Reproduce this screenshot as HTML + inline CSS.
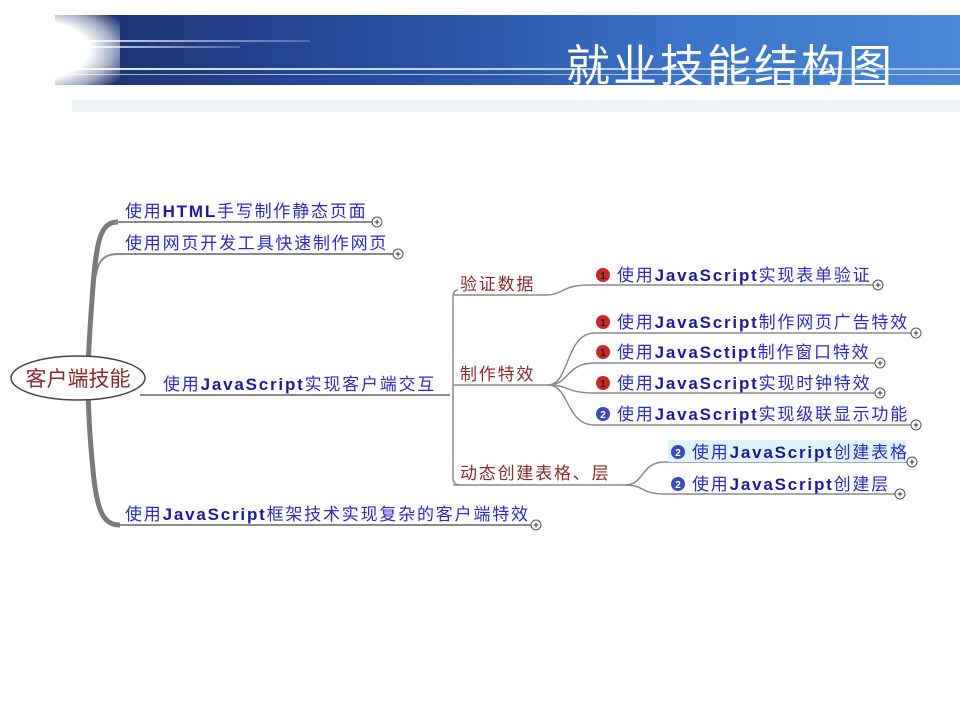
<!DOCTYPE html>
<html><head><meta charset="utf-8"><style>
html,body{margin:0;padding:0;background:#fff;}
body{width:960px;height:720px;position:relative;overflow:hidden;font-family:"Liberation Sans","Noto Sans CJK SC",sans-serif;}
.band{position:absolute;left:55px;top:15px;width:905px;height:70px;background:linear-gradient(90deg,#1c2f6a 0%,#243f8c 20%,#2a56a8 45%,#3a74c8 70%,#4a88d8 100%);}
.glow{position:absolute;left:0;top:5px;width:120px;height:90px;background:radial-gradient(ellipse at 30% 50%,#fff 45%,rgba(255,255,255,0.6) 65%,rgba(255,255,255,0) 85%);}
.streak{position:absolute;left:60px;height:2px;background:linear-gradient(90deg,rgba(255,255,255,.9),rgba(255,255,255,.2));}
.gray{position:absolute;left:72px;top:100px;width:888px;height:12px;background:#eef1f6;}
.title{position:absolute;left:566px;top:36px;color:#fff;font-size:44px;font-family:"Noto Sans CJK SC",sans-serif;letter-spacing:3px;line-height:52px;}
</style></head><body>
<div class="band"></div>
<div class="streak" style="top:40px;width:250px"></div>
<div class="streak" style="top:46px;width:180px"></div>
<div class="streak" style="top:68px;width:900px;height:2px;background:linear-gradient(90deg,rgba(255,255,255,.9),rgba(255,255,255,.5))"></div>
<div class="streak" style="top:74px;width:900px;height:1px;background:rgba(255,255,255,.6)"></div>
<div class="glow"></div>
<div class="gray"></div>
<div class="title">就业技能结构图</div>
<svg width="960" height="720" style="position:absolute;left:0;top:0" font-family="'Liberation Sans','Noto Sans CJK SC',sans-serif">
<g fill="none" stroke="#8a8a8a">
<path d="M118,222 C100,222 96,240 92,300 C89,340 88,360 88,378 C88,400 89,430 93,470 C97,515 105,525 120,525" stroke-width="5" stroke="#7a7a7a"/>
<path d="M115,222 L373,222" stroke-width="2"/>
<path d="M96,275 C98,260 105,254 118,254 L394,254" stroke-width="2"/>
<path d="M120,525 L531,525" stroke-width="2"/>
<path d="M140,395 L450,395" stroke-width="2"/>
<path d="M458,290 C453,290 453,295 453,300 L453,478 C453,483 456,485 460,485" stroke-width="1.5"/>
<path d="M453,295 L545,295 C565,295 560,285 590,285 L873,285" stroke-width="1.5"/>
<path d="M453,385 L548,385 C570,385 565,333 595,333 L911,333" stroke-width="1.5"/>
<path d="M548,385 C570,385 565,363 595,363 L875,363" stroke-width="1.5"/>
<path d="M548,385 C570,385 565,393 595,393 L875,393" stroke-width="1.5"/>
<path d="M548,385 C570,385 565,425 595,425 L911,425" stroke-width="1.5"/>
<path d="M453,485 L625,485 C645,485 640,462 665,462 L907,462" stroke-width="1.5"/>
<path d="M625,485 C645,485 640,494 665,494 L895,494" stroke-width="1.5"/>
</g>
<rect x="668" y="440" width="238" height="22" fill="#dff3fb"/>
<g fill="#fff" stroke="#555" stroke-width="1">
<circle cx="377" cy="222" r="5"/><circle cx="398" cy="254" r="5"/><circle cx="536" cy="525" r="5"/>
<circle cx="878" cy="285" r="5"/><circle cx="916" cy="333" r="5"/><circle cx="880" cy="363" r="5"/>
<circle cx="880" cy="393" r="5"/><circle cx="916" cy="425" r="5"/><circle cx="912" cy="462" r="5"/><circle cx="900" cy="494" r="5"/>
</g>
<g fill="#333" font-size="9" text-anchor="middle" font-weight="bold">
<text x="377" y="225">+</text><text x="398" y="257">+</text><text x="536" y="528">+</text><text x="878" y="288">+</text><text x="916" y="336">+</text><text x="880" y="366">+</text><text x="880" y="396">+</text><text x="916" y="428">+</text><text x="912" y="465">+</text><text x="900" y="497">+</text>
</g>
<ellipse cx="78" cy="378" rx="67" ry="22" fill="#fff" stroke="#444" stroke-width="1.5"/>
<text x="78" y="386" text-anchor="middle" fill="#8b2a2a" font-size="21">客户端技能</text>
<g fill="#2a2ad0" font-size="17" letter-spacing="1.8">
<text x="125" y="217">使用<tspan font-weight="bold" fill="#1a1aa0">HTML</tspan>手写制作静态页面</text>
<text x="125" y="249">使用网页开发工具快速制作网页</text>
<text x="163" y="390">使用<tspan font-weight="bold" fill="#1a1aa0">JavaScript</tspan>实现客户端交互</text>
<text x="125" y="520">使用<tspan font-weight="bold" fill="#1a1aa0">JavaScript</tspan>框架技术实现复杂的客户端特效</text>
<text x="617" y="281">使用<tspan font-weight="bold" fill="#1a1aa0">JavaScript</tspan>实现表单验证</text>
<text x="617" y="328">使用<tspan font-weight="bold" fill="#1a1aa0">JavaScript</tspan>制作网页广告特效</text>
<text x="617" y="358">使用<tspan font-weight="bold" fill="#1a1aa0">JavaSctipt</tspan>制作窗口特效</text>
<text x="617" y="389">使用<tspan font-weight="bold" fill="#1a1aa0">JavaScript</tspan>实现时钟特效</text>
<text x="617" y="420">使用<tspan font-weight="bold" fill="#1a1aa0">JavaScript</tspan>实现级联显示功能</text>
<text x="692" y="458">使用<tspan font-weight="bold" fill="#1a1aa0">JavaScript</tspan>创建表格</text>
<text x="692" y="490">使用<tspan font-weight="bold" fill="#1a1aa0">JavaScript</tspan>创建层</text>
</g>
<g fill="#8b2a2a" font-size="17" letter-spacing="1.8">
<text x="460" y="290">验证数据</text>
<text x="460" y="380">制作特效</text>
<text x="460" y="479">动态创建表格、层</text>
</g>
<g font-size="10" font-weight="bold" fill="#fff" text-anchor="middle">
<circle cx="603" cy="275" r="7" fill="#c82828"/><text x="603" y="279" fill="#222">1</text>
<circle cx="603" cy="322" r="7" fill="#c82828"/><text x="603" y="326" fill="#222">1</text>
<circle cx="603" cy="352" r="7" fill="#c82828"/><text x="603" y="356" fill="#222">1</text>
<circle cx="603" cy="383" r="7" fill="#c82828"/><text x="603" y="387" fill="#222">1</text>
<circle cx="603" cy="414" r="7" fill="#3a4ab8"/><text x="603" y="418">2</text>
<circle cx="678" cy="452" r="7" fill="#3a4ab8"/><text x="678" y="456">2</text>
<circle cx="678" cy="484" r="7" fill="#3a4ab8"/><text x="678" y="488">2</text>
</g>
</svg>
</body></html>
